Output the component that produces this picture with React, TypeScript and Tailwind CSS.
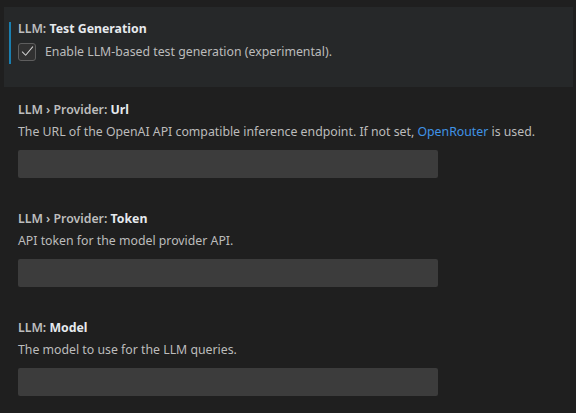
import React from "react";

const font = { fontFamily: '"Noto Sans", "Open Sans", sans-serif' };

function Title({ cat, label }: { cat: string; label: string }) {
  return (
    <div className="h-[18px] leading-[18px] text-[12.3px] whitespace-nowrap">
      <span className="font-semibold text-[#bdbdbd]">{cat}</span>
      <span className="font-bold text-[#e6eaee]">{label}</span>
    </div>
  );
}

function TextSetting({
  cat,
  label,
  children,
}: {
  cat: string;
  label: string;
  children: React.ReactNode;
}) {
  return (
    <div className="pl-[18px] pt-[13.5px] pb-[18px]">
      <Title cat={cat} label={label} />
      <div className="mt-[4.5px] h-[18px] leading-[18px] text-[12.3px] text-[#bcbcbc] whitespace-nowrap">
        {children}
      </div>
      <div className="mt-[9px] h-[28px] w-[420px] rounded-[2px] bg-[#3c3c3c]" />
    </div>
  );
}

export default function App() {
  return (
    <div className="w-[576px] h-[413px] bg-[#1f1f1f] pt-[7px] overflow-hidden" style={font}>
      <div className="relative ml-[4px] mr-[3px] h-[80px] bg-[#262829] pl-[14px] pt-[12.5px]">
        <div className="absolute left-[5px] top-[15px] h-[42px] w-[2px] bg-[#1a7fb0]" />
        <Title cat="LLM: " label="Test Generation" />
        <div className="mt-[4.5px] flex items-center">
          <div className="flex h-[18px] w-[18px] items-center justify-center rounded-[3px] border border-[#5e5e5e] bg-[#313131]">
            <svg width="15" height="15" viewBox="0 0 16 16" fill="none">
              <path d="M2.5 8.5 L6 12 L13.5 3" stroke="#d4d4d4" strokeWidth="1.1" strokeLinecap="round" strokeLinejoin="round" />
            </svg>
          </div>
          <span className="ml-[9px] pt-[1px] text-[12.3px] leading-[18px] text-[#bcbcbc] whitespace-nowrap">
            Enable LLM-based test generation (experimental).
          </span>
        </div>
      </div>
      <TextSetting cat="LLM › Provider: " label="Url">
        The URL of the OpenAI API compatible inference endpoint. If not set,{" "}
        <span className="text-[#3f93e6]">OpenRouter</span> is used.
      </TextSetting>
      <TextSetting cat="LLM › Provider: " label="Token">
        API token for the model provider API.
      </TextSetting>
      <TextSetting cat="LLM: " label="Model">
        The model to use for the LLM queries.
      </TextSetting>
    </div>
  );
}
